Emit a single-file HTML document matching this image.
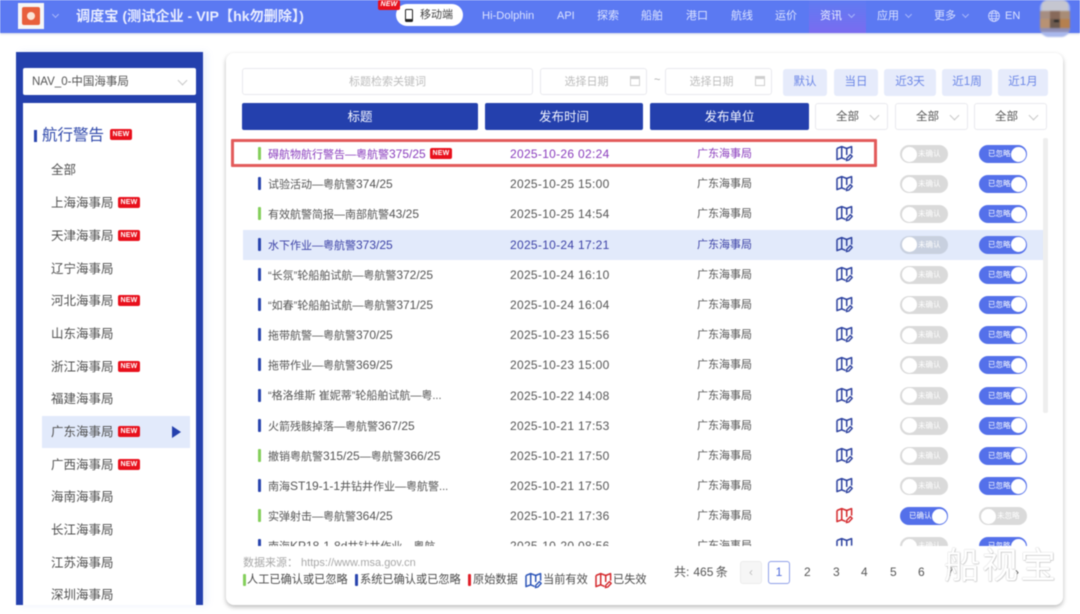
<!DOCTYPE html>
<html lang="zh"><head><meta charset="utf-8"><title>调度宝</title>
<style>
*{box-sizing:border-box}
html,body{margin:0;padding:0;background:#fff}
body{width:1080px;height:614px;overflow:hidden;position:relative;font-family:"Liberation Sans","Noto Sans CJK SC",sans-serif;color:#4a4a4a}
#p{position:absolute;left:0;top:0;width:1080px;height:614px;overflow:hidden;filter:blur(.45px)}
.a{position:absolute;white-space:nowrap}
.hd{left:0;top:0;width:1080px;height:33px;background:#5b79f2;box-shadow:0 1px 2px rgba(60,80,160,.25)}
.nav{top:9px;font-size:11px;line-height:15px;color:#dbe2ff}
.chev{width:5px;height:5px;border-right:1px solid #a9b8fb;border-bottom:1px solid #a9b8fb;transform:rotate(45deg)}
.chg{width:7px;height:7px;border-right:1px solid #c8c8c8;border-bottom:1px solid #c8c8c8;transform:rotate(45deg)}
.nw{background:#e8101c;color:#fff;font-size:7px;font-weight:bold;width:22px;height:11px;line-height:11px;text-align:center;border-radius:2px;letter-spacing:.2px}
.side{left:16px;top:52px;width:187px;height:553px;background:#2440ad;box-shadow:4px 0 7px rgba(110,140,230,.12)}
.list{left:23px;top:103px;width:173px;height:502px;background:#fff;overflow:hidden}
.it{left:28px;font-size:12.5px;line-height:18px;color:#505050}
.list .nw{left:95px}
.card{left:226px;top:53px;width:837px;height:552px;background:#fff;border-radius:8px;box-shadow:0 2px 5px rgba(0,0,0,.28)}
.ip{top:68px;height:27px;border:1px solid #e9e9ee;border-radius:3px;background:#fff;font-size:11px;line-height:27px;color:#bdbdbd;text-align:center}
.qb{top:69px;height:27px;background:#e6ebfb;border-radius:3px;font-size:11.5px;line-height:27px;color:#6b86e6;text-align:center}
.th{top:103px;height:27px;background:#2440ad;border-radius:2px;color:#f3f5ff;font-size:12.5px;line-height:29px;text-align:center}
.sel{top:103px;height:27px;border:1px solid #e9e9ee;border-radius:3px;background:#fff;font-size:11.5px;line-height:27px;color:#555;padding-left:20px}
.cal{top:76px;width:10px;height:10px;border:1px solid #cfcfcf;border-top-width:3px}
#rows{left:243px;top:139px;width:800px;height:407px;overflow:hidden}
.r{position:relative;height:30.2px;font-size:11px;line-height:30px;color:#555}
.r.h{background:#e2eafb;color:#3c42a6}
.r.n{color:#8a3dbd}
.r span,.r svg,.r u{position:absolute}
.bar{left:15px;top:8px;width:3px;height:13px;border-radius:1px;background:#2a45ae}
.bar.g{background:#84cf5b}
.t{left:25px;top:0}
.t i,.lg i{font-style:normal;font-size:12px}
.d{left:267px;top:0;font-size:12px;letter-spacing:.3px}
.u{left:454px;top:0}
.r svg{left:593px;top:6px;width:17px;height:17px}
.tg{top:6px;width:48px;height:18px;border-radius:9px;background:#dadada;color:#fff;font-size:7.5px;line-height:18px}
.tg::after{content:"";position:absolute;top:1.5px;left:1.5px;width:15px;height:15px;border-radius:50%;background:#fff}
.tg.on{background:#5470ea}
.tg.on::after{left:31.5px}
.tg b{position:absolute;font-weight:normal;left:18px;top:0}
.tg.on b{left:9px}
.r.h .tg:not(.on){background:#c8d0df}
.x1{left:657px}.x2{left:736px}
.pg{top:563px;font-size:12px;line-height:18px;color:#555}
.lg{top:572px;font-size:11.2px;line-height:16px;color:#4a4a4a}
.lb{top:574px;width:3px;height:12px;border-radius:1px}
</style></head><body>
<svg width="0" height="0" style="position:absolute"><defs>
<symbol id="m" viewBox="0 0 17 17"><path d="M1 3.5 5.7 1.6 10.7 3.5 15.6 1.6V8.6M1 3.5V14.6L5.7 12.8 9.6 14.4M5.7 1.6V12.8M10.7 3.5V10" fill="none" stroke="currentColor" stroke-width="1.5" stroke-linejoin="round"/><path d="M10.4 15.6 10.9 13.1 14.4 9.6 16.2 11.4 12.8 15Z" fill="none" stroke="currentColor" stroke-width="1.4" stroke-linejoin="round"/></symbol>
</defs></svg>
<div id="p">
<div class="a hd"></div>
<div class="a" style="left:18px;top:3px;width:26px;height:26px;background:#f6f6f6"></div>
<div class="a" style="left:22px;top:7px;width:18px;height:18px;background:#e85f3c;border-radius:2px"></div>
<div class="a" style="left:27px;top:12px;width:8px;height:8px;background:#fbe4d6;border-radius:50%"></div>
<div class="a chev" style="left:53px;top:12px"></div>
<div class="a" style="left:76px;top:6px;font-size:14.15px;line-height:20px;font-weight:bold;color:#e9edff">调度宝 (测试企业 - VIP【hk勿删除】)</div>
<div class="a" style="left:396px;top:4px;width:67px;height:22px;background:#fff;border-radius:11px"></div>
<div class="a" style="left:405px;top:9px;width:8px;height:13px;border:1.5px solid #222;border-radius:1.5px;border-bottom-width:3px"></div>
<div class="a" style="left:420px;top:8px;font-size:11px;line-height:15px;color:#444">移动端</div>
<div class="a nw" style="left:378px;top:0;height:10px;line-height:9px;font-style:italic">NEW</div>
<div class="a nav" style="left:482px;font-size:11.2px">Hi-Dolphin</div>
<div class="a nav" style="left:557px">API</div>
<div class="a nav" style="left:597px">探索</div>
<div class="a nav" style="left:641px">船舶</div>
<div class="a nav" style="left:686px">港口</div>
<div class="a nav" style="left:731px">航线</div>
<div class="a nav" style="left:775px">运价</div>
<div class="a" style="left:809px;top:0;width:57px;height:33px;background:linear-gradient(#5f7bf2,#7a6cf0)"></div>
<div class="a nav" style="left:820px;color:#eef1ff">资讯</div><div class="a chev" style="left:849px;top:12px"></div>
<div class="a nav" style="left:877px">应用</div><div class="a chev" style="left:906px;top:12px"></div>
<div class="a nav" style="left:934px">更多</div><div class="a chev" style="left:963px;top:12px"></div>
<svg class="a" style="left:988px;top:10px" width="12" height="12" viewBox="0 0 12 12" fill="none" stroke="#d5dcff" stroke-width=".8"><circle cx="6" cy="6" r="5.4"/><ellipse cx="6" cy="6" rx="2.4" ry="5.4"/><path d="M.6 6h10.8M1.4 3.3h9.2M1.4 8.7h9.2"/></svg>
<div class="a nav" style="left:1005px">EN</div>
<div class="a" style="left:1040px;top:0;width:30px;height:37px;border-radius:8px 8px 9px 9px;overflow:hidden;background:#a9b8ec;filter:blur(.8px)">
<div class="a" style="left:2px;top:0;width:26px;height:11px;background:#c5c6d0"></div>
<div class="a" style="left:0;top:11px;width:10px;height:8px;background:#a68e82"></div>
<div class="a" style="left:10px;top:11px;width:10px;height:8px;background:#87695a"></div>
<div class="a" style="left:20px;top:11px;width:10px;height:8px;background:#a88c76"></div>
<div class="a" style="left:0;top:19px;width:10px;height:9px;background:#b89274"></div>
<div class="a" style="left:10px;top:19px;width:10px;height:9px;background:#6d5a4e"></div>
<div class="a" style="left:20px;top:19px;width:10px;height:9px;background:#b5804f"></div>
<div class="a" style="left:14px;top:20px;width:5px;height:2px;background:#222"></div>
<div class="a" style="left:0;top:28px;width:30px;height:4px;background:#8f8fb5"></div>
</div>

<div class="a side"></div>
<div class="a" style="left:23px;top:68px;width:173px;height:27px;background:#fff;border-radius:2px;font-size:11.5px;line-height:28px;padding-left:9px;color:#555">NAV_0-中国海事局</div>
<div class="a chg" style="left:179px;top:77px"></div>
<div class="a list">
<div class="a" style="left:11px;top:27px;width:3px;height:12px;background:#2a45ae"></div>
<div class="a" style="left:19px;top:21px;font-size:15.5px;line-height:23px;color:#3049ab">航行警告</div>
<div class="a nw" style="left:87px;top:26px">NEW</div>
<div class="a" style="left:19px;top:313px;width:148px;height:32px;background:#e2eafb"></div>
<svg class="a" style="left:148px;top:322px" width="11" height="14"><path d="M1 1 10 7 1 13Z" fill="#2440ad"/></svg>
<div class="a it" style="top:58px">全部</div>
<div class="a it" style="top:91px">上海海事局</div><div class="a nw" style="top:94px">NEW</div>
<div class="a it" style="top:124px">天津海事局</div><div class="a nw" style="top:127px">NEW</div>
<div class="a it" style="top:157px">辽宁海事局</div>
<div class="a it" style="top:189px">河北海事局</div><div class="a nw" style="top:192px">NEW</div>
<div class="a it" style="top:222px">山东海事局</div>
<div class="a it" style="top:255px">浙江海事局</div><div class="a nw" style="top:258px">NEW</div>
<div class="a it" style="top:287px">福建海事局</div>
<div class="a it" style="top:320px">广东海事局</div><div class="a nw" style="top:323px">NEW</div>
<div class="a it" style="top:353px">广西海事局</div><div class="a nw" style="top:356px">NEW</div>
<div class="a it" style="top:385px">海南海事局</div>
<div class="a it" style="top:418px">长江海事局</div>
<div class="a it" style="top:451px">江苏海事局</div>
<div class="a it" style="top:483px">深圳海事局</div>
</div>

<div class="a card"></div>
<div class="a ip" style="left:242px;width:291px">标题检索关键词</div>
<div class="a ip" style="left:540px;width:107px;padding-right:14px">选择日期</div><div class="a cal" style="left:630px"></div>
<div class="a" style="left:654px;top:74px;font-size:11px;color:#aaa">~</div>
<div class="a ip" style="left:665px;width:107px;padding-right:14px">选择日期</div><div class="a cal" style="left:755px"></div>
<div class="a qb" style="left:783px;width:44px">默认</div>
<div class="a qb" style="left:834px;width:44px">当日</div>
<div class="a qb" style="left:884px;width:52px">近3天</div>
<div class="a qb" style="left:942px;width:50px">近1周</div>
<div class="a qb" style="left:998px;width:50px">近1月</div>
<div class="a th" style="left:242px;width:236px">标题</div>
<div class="a th" style="left:485px;width:158px">发布时间</div>
<div class="a th" style="left:650px;width:159px">发布单位</div>
<div class="a sel" style="left:815px;width:73px">全部</div><div class="a chg" style="left:871px;top:112px"></div>
<div class="a sel" style="left:895px;width:73px">全部</div><div class="a chg" style="left:951px;top:112px"></div>
<div class="a sel" style="left:974px;width:73px">全部</div><div class="a chg" style="left:1030px;top:112px"></div>

<div class="a" style="left:1043px;top:138px;width:5px;height:275px;background:#eeeeee;border-radius:2px"></div>

<div class="a" id="rows">
<div class="r n"><u class="bar g"></u><span class="t">碍航物航行警告—粤航警<i>375/25</i></span><span class="nw" style="left:187px;top:9px;line-height:11px">NEW</span><span class="d">2025-10-26 02:24</span><span class="u">广东海事局</span><svg style="color:#2c419f"><use href="#m"/></svg><span class="tg x1"><b>未确认</b></span><span class="tg x2 on"><b>已忽略</b></span></div>
<div class="r"><u class="bar"></u><span class="t">试验活动—粤航警<i>374/25</i></span><span class="d">2025-10-25 15:00</span><span class="u">广东海事局</span><svg style="color:#2c419f"><use href="#m"/></svg><span class="tg x1"><b>未确认</b></span><span class="tg x2 on"><b>已忽略</b></span></div>
<div class="r"><u class="bar g"></u><span class="t">有效航警简报—南部航警<i>43/25</i></span><span class="d">2025-10-25 14:54</span><span class="u">广东海事局</span><svg style="color:#2c419f"><use href="#m"/></svg><span class="tg x1"><b>未确认</b></span><span class="tg x2 on"><b>已忽略</b></span></div>
<div class="r h"><u class="bar"></u><span class="t">水下作业—粤航警<i>373/25</i></span><span class="d">2025-10-24 17:21</span><span class="u">广东海事局</span><svg style="color:#2c419f"><use href="#m"/></svg><span class="tg x1"><b>未确认</b></span><span class="tg x2 on"><b>已忽略</b></span></div>
<div class="r"><u class="bar"></u><span class="t">“长氛”轮船舶试航—粤航警<i>372/25</i></span><span class="d">2025-10-24 16:10</span><span class="u">广东海事局</span><svg style="color:#2c419f"><use href="#m"/></svg><span class="tg x1"><b>未确认</b></span><span class="tg x2 on"><b>已忽略</b></span></div>
<div class="r"><u class="bar"></u><span class="t">“如春”轮船舶试航—粤航警<i>371/25</i></span><span class="d">2025-10-24 16:04</span><span class="u">广东海事局</span><svg style="color:#2c419f"><use href="#m"/></svg><span class="tg x1"><b>未确认</b></span><span class="tg x2 on"><b>已忽略</b></span></div>
<div class="r"><u class="bar"></u><span class="t">拖带航警—粤航警<i>370/25</i></span><span class="d">2025-10-23 15:56</span><span class="u">广东海事局</span><svg style="color:#2c419f"><use href="#m"/></svg><span class="tg x1"><b>未确认</b></span><span class="tg x2 on"><b>已忽略</b></span></div>
<div class="r"><u class="bar"></u><span class="t">拖带作业—粤航警<i>369/25</i></span><span class="d">2025-10-23 15:00</span><span class="u">广东海事局</span><svg style="color:#2c419f"><use href="#m"/></svg><span class="tg x1"><b>未确认</b></span><span class="tg x2 on"><b>已忽略</b></span></div>
<div class="r"><u class="bar"></u><span class="t">“格洛维斯 崔妮蒂”轮船舶试航—粤...</span><span class="d">2025-10-22 14:08</span><span class="u">广东海事局</span><svg style="color:#2c419f"><use href="#m"/></svg><span class="tg x1"><b>未确认</b></span><span class="tg x2 on"><b>已忽略</b></span></div>
<div class="r"><u class="bar"></u><span class="t">火箭残骸掉落—粤航警<i>367/25</i></span><span class="d">2025-10-21 17:53</span><span class="u">广东海事局</span><svg style="color:#2c419f"><use href="#m"/></svg><span class="tg x1"><b>未确认</b></span><span class="tg x2 on"><b>已忽略</b></span></div>
<div class="r"><u class="bar g"></u><span class="t">撤销粤航警<i>315/25</i>—粤航警<i>366/25</i></span><span class="d">2025-10-21 17:50</span><span class="u">广东海事局</span><svg style="color:#2c419f"><use href="#m"/></svg><span class="tg x1"><b>未确认</b></span><span class="tg x2 on"><b>已忽略</b></span></div>
<div class="r"><u class="bar"></u><span class="t">南海<i>ST19-1-1</i>井钻井作业—粤航警...</span><span class="d">2025-10-21 17:50</span><span class="u">广东海事局</span><svg style="color:#2c419f"><use href="#m"/></svg><span class="tg x1"><b>未确认</b></span><span class="tg x2 on"><b>已忽略</b></span></div>
<div class="r"><u class="bar g"></u><span class="t">实弹射击—粤航警<i>364/25</i></span><span class="d">2025-10-21 17:36</span><span class="u">广东海事局</span><svg style="color:#d4282c"><use href="#m"/></svg><span class="tg x1 on"><b>已确认</b></span><span class="tg x2"><b>未忽略</b></span></div>
<div class="r"><u class="bar"></u><span class="t">南海<i>KP18-1-8d</i>井钻井作业—粤航</span><span class="d">2025-10-20 08:56</span><span class="u">广东海事局</span><svg style="color:#2c419f"><use href="#m"/></svg><span class="tg x1"><b>未确认</b></span><span class="tg x2 on"><b>已忽略</b></span></div>
</div>

<div class="a" style="left:243px;top:555px;font-size:11px;line-height:16px;color:#a8a8a8">数据来源： https://www.msa.gov.cn</div>
<div class="a lb" style="left:243px;background:#84cf5b"></div><div class="a lg" style="left:247px">人工已确认或已忽略</div>
<div class="a lb" style="left:355px;background:#2a45ae"></div><div class="a lg" style="left:360px">系统已确认或已忽略</div>
<div class="a lb" style="left:468px;background:#e0202a"></div><div class="a lg" style="left:473px">原始数据</div>
<svg class="a" style="left:525px;top:572px;color:#2c55b8" width="17" height="17"><use href="#m"/></svg><div class="a lg" style="left:543px">当前有效</div>
<svg class="a" style="left:595px;top:572px;color:#d4282c" width="17" height="17"><use href="#m"/></svg><div class="a lg" style="left:613px">已失效</div>

<div class="a pg" style="left:674px;word-spacing:-1px">共:<span style="margin-left:4px">465 条</span></div>
<div class="a" style="left:740px;top:561px;width:22px;height:23px;background:#f6f6f6;border:1px solid #ececec;border-radius:3px;color:#c0c0c0;font-size:12px;line-height:20px;text-align:center">‹</div>
<div class="a" style="left:768px;top:561px;width:22px;height:23px;border:1px solid #8fa0e8;border-radius:3px;color:#4f6bdc;font-size:12px;line-height:21px;text-align:center">1</div>
<div class="a pg" style="left:804px">2</div>
<div class="a pg" style="left:833px">3</div>
<div class="a pg" style="left:861px">4</div>
<div class="a pg" style="left:890px">5</div>
<div class="a pg" style="left:918px">6</div>
<div class="a pg" style="left:947px">7</div>
<div class="a pg" style="left:1015px">›</div>
<div class="a" style="left:944px;top:544px;font-size:36px;line-height:44px;letter-spacing:2px;color:#fff;text-shadow:0 0 1px #aaa,.5px .5px 1px #bbb">船视宝</div>

<div class="a" style="left:231px;top:139px;width:646px;height:28px;border:3px solid #e35b5b;border-radius:1px"></div>
</div>
</body></html>
